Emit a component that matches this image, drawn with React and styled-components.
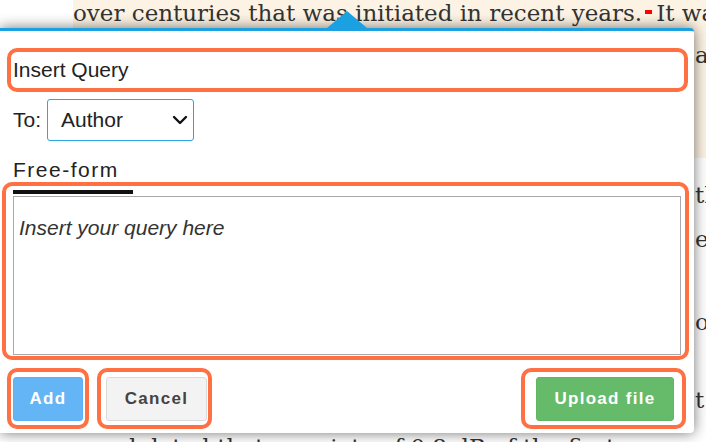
import React from "react";
import styled, { createGlobalStyle } from "styled-components";

const Global = createGlobalStyle`
  html, body { margin: 0; padding: 0; background: #fff; }
  body { font-family: "Liberation Sans", Arial, sans-serif; }
`;

const Page = styled.div`
  position: relative;
  width: 706px;
  height: 442px;
  overflow: hidden;
  background: #fff;
  display: flex;
  flex-direction: column;
  font-family: "DejaVu Serif", Georgia, serif;
  font-size: 23px;
  color: #333;
`;

const Highlighted = styled.div`
  margin-left: 73px;
  height: 158px;
  flex-shrink: 0;
  background: #fdf3e4;
  display: flex;
  flex-direction: column;
`;

const BgLine = styled.div`
  margin-top: ${(p) => p.$mt || 0}px;
  padding-left: ${(p) => p.$indent || 0}px;
  line-height: 26px;
  height: 26px;
  white-space: nowrap;
  flex-shrink: 0;
`;

const RedMark = styled.span`
  display: inline-block;
  width: 7px;
  height: 4px;
  background: #f00;
  margin: 0 4px 0 3px;
  vertical-align: 7px;
`;

const Popup = styled.div`
  position: absolute;
  left: 0;
  top: 28px;
  width: 694px;
  height: 405px;
  box-sizing: border-box;
  background: #fff;
  border-top: 3px solid #1ba1e2;
  border-radius: 0 4px 4px 0;
  box-shadow: 0 0 14px rgba(0, 0, 0, 0.55);
  display: flex;
  flex-direction: column;
  font-family: "Liberation Sans", Arial, sans-serif;
  color: #333;
`;

const Arrow = styled.div`
  position: absolute;
  left: 327px;
  top: -20px;
  width: 0;
  height: 0;
  border-left: 20px solid transparent;
  border-right: 20px solid transparent;
  border-bottom: 17px solid #1ba1e2;
`;

const Outline = styled.div`
  box-sizing: border-box;
  border: 4px solid #ff7043;
  border-radius: 10px;
  padding: ${(p) => p.$pad || 0};
  margin: ${(p) => p.$m || 0};
  display: flex;
  flex-direction: ${(p) => (p.$col ? "column" : "row")};
  align-items: ${(p) => (p.$col ? "stretch" : "center")};
  flex-shrink: 0;
`;

const TitleOutline = styled(Outline)`
  height: 44px;
`;

const TitleInput = styled.input`
  flex: 1;
  height: 36px;
  border: none;
  outline: none;
  background: transparent;
  padding: 0 0 0 2px;
  font-family: "Liberation Sans", Arial, sans-serif;
  font-size: 21px;
  color: #222;
`;

const ToRow = styled.div`
  display: flex;
  align-items: center;
  gap: 6px;
  margin-top: 7px;
  padding-left: 13px;
  height: 42px;
  font-size: 21px;
  color: #222;
`;

const SelectBox = styled.div`
  box-sizing: border-box;
  width: 147px;
  height: 42px;
  border: 1px solid #2aa7e0;
  border-radius: 3px;
  display: flex;
  align-items: center;
  justify-content: space-between;
  padding: 0 1px 0 13px;
  font-size: 21px;
  color: #222;
`;

const TabLabel = styled.div`
  margin-top: 17px;
  padding-left: 13px;
  font-size: 21px;
  line-height: 24px;
  letter-spacing: 1.5px;
  color: #222;
`;

const TabBar = styled.div`
  margin: 4px 0 0 7px;
  width: 120px;
  height: 4px;
  background: #111;
`;

const QueryArea = styled.textarea`
  box-sizing: border-box;
  margin: 2px 4px 1px 7px;
  height: 159px;
  border: 1px solid #a9a9a9;
  padding: 19px 5px;
  resize: none;
  outline: none;
  font-family: "Liberation Sans", Arial, sans-serif;
  font-size: 21px;
  line-height: 24px;
  color: #222;
  &::placeholder {
    color: #333;
    font-style: italic;
    opacity: 1;
  }
`;

const ButtonRow = styled.div`
  display: flex;
  align-items: center;
  gap: 8px;
  margin-top: 8px;
  padding: 0 8px 0 7px;
`;

const palette = {
  blue: { bg: "#64b5f6", border: "#5eb0f2", color: "#fff" },
  gray: { bg: "#f3f3f3", border: "#dadada", color: "#444" },
  green: { bg: "#66bb6a", border: "#60b664", color: "#fff" },
};

const Button = styled.button`
  box-sizing: border-box;
  width: ${(p) => p.$w}px;
  height: 44px;
  border: 1px solid ${(p) => palette[p.$kind].border};
  border-radius: 3px;
  background: ${(p) => palette[p.$kind].bg};
  color: ${(p) => palette[p.$kind].color};
  font-family: "Liberation Sans", Arial, sans-serif;
  font-weight: 700;
  font-size: 17px;
  letter-spacing: 1.3px;
  padding: 0;
  margin-top: 1px;
  cursor: pointer;
`;

const Spacer = styled.div`
  flex: 1;
`;

function Chevron() {
  return (
    <svg width="24" height="24" viewBox="0 0 24 24" fill="none" stroke="#111" strokeWidth="2.4" strokeLinecap="round" strokeLinejoin="round">
      <path d="m6 9 6 6 6-6" />
    </svg>
  );
}

export default function App() {
  return (
    <>
      <Global />
      <Page>
        <Highlighted>
          <BgLine>
            over centuries that was initiated in recent years.<RedMark />It was
          </BgLine>
          <BgLine $mt={16} $indent={622}>a</BgLine>
        </Highlighted>
        <BgLine $mt={24} $indent={695}>th</BgLine>
        <BgLine $mt={18} $indent={695}>e</BgLine>
        <BgLine $mt={57} $indent={695}>o</BgLine>
        <BgLine $mt={52} $indent={695}>t</BgLine>
        <BgLine $mt={21} $indent={86}>modulated that a variety of 0.8 dB of the first</BgLine>

        <Popup>
          <Arrow />
          <TitleOutline $m="17px 6px 0 7px">
            <TitleInput defaultValue="Insert Query" />
          </TitleOutline>
          <ToRow>
            <span>To:</span>
            <SelectBox>
              <span>Author</span>
              <Chevron />
            </SelectBox>
          </ToRow>
          <TabLabel>Free-form</TabLabel>
          <Outline $col $m="0 5px 0 2px">
            <TabBar />
            <QueryArea placeholder="Insert your query here" />
          </Outline>
          <ButtonRow>
            <Outline $pad="4px 2px">
              <Button $kind="blue" $w={70}>Add</Button>
            </Outline>
            <Outline $pad="4px 1px 4px 5px">
              <Button $kind="gray" $w={101}>Cancel</Button>
            </Outline>
            <Spacer />
            <Outline $pad="4px 8px 4px 11px">
              <Button $kind="green" $w={138}>Upload file</Button>
            </Outline>
          </ButtonRow>
        </Popup>
      </Page>
    </>
  );
}
